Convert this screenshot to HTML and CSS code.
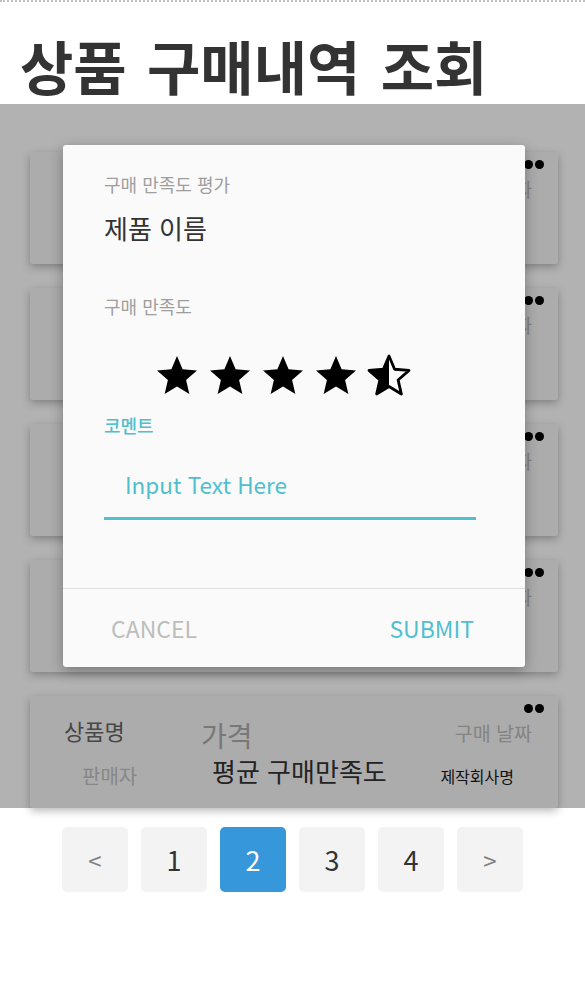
FILE: index.html
```html
<!DOCTYPE html>
<html lang="ko">
<head>
<meta charset="utf-8">
<title>상품 구매내역 조회</title>
<link rel="stylesheet" href="styles.css">
</head>
<body>
<header class="page-header">
  <h1 class="page-title">상품 구매내역 조회</h1>
</header>

<section class="list">
  <div class="card">
    <span class="dots"><i></i><i></i></span>
    <div class="row row-top"><span class="name">상품명</span><span class="price">가격</span><span class="date">구매 날짜</span></div>
    <div class="row row-bottom"><span class="seller">판매자</span><span class="rating">평균 구매만족도</span><span class="maker">제작회사명</span></div>
  </div>
  <div class="card">
    <span class="dots"><i></i><i></i></span>
    <div class="row row-top"><span class="name">상품명</span><span class="price">가격</span><span class="date">구매 날짜</span></div>
    <div class="row row-bottom"><span class="seller">판매자</span><span class="rating">평균 구매만족도</span><span class="maker">제작회사명</span></div>
  </div>
  <div class="card">
    <span class="dots"><i></i><i></i></span>
    <div class="row row-top"><span class="name">상품명</span><span class="price">가격</span><span class="date">구매 날짜</span></div>
    <div class="row row-bottom"><span class="seller">판매자</span><span class="rating">평균 구매만족도</span><span class="maker">제작회사명</span></div>
  </div>
  <div class="card">
    <span class="dots"><i></i><i></i></span>
    <div class="row row-top"><span class="name">상품명</span><span class="price">가격</span><span class="date">구매 날짜</span></div>
    <div class="row row-bottom"><span class="seller">판매자</span><span class="rating">평균 구매만족도</span><span class="maker">제작회사명</span></div>
  </div>
  <div class="card">
    <span class="dots"><i></i><i></i></span>
    <div class="row row-top"><span class="name">상품명</span><span class="price">가격</span><span class="date">구매 날짜</span></div>
    <div class="row row-bottom"><span class="seller">판매자</span><span class="rating">평균 구매만족도</span><span class="maker">제작회사명</span></div>
  </div>

  <div class="overlay">
    <div class="dialog">
      <div class="dialog-body">
        <div class="dlg-caption">구매 만족도 평가</div>
        <div class="dlg-product">제품 이름</div>
        <div class="dlg-label">구매 만족도</div>
        <div class="stars">
          <svg class="star" viewBox="0 0 24 24"><path d="M12 17.27L18.18 21l-1.64-7.03L22 9.24l-7.19-.61L12 2 9.19 8.63 2 9.24l5.46 4.73L5.82 21z"/></svg>
          <svg class="star" viewBox="0 0 24 24"><path d="M12 17.27L18.18 21l-1.64-7.03L22 9.24l-7.19-.61L12 2 9.19 8.63 2 9.24l5.46 4.73L5.82 21z"/></svg>
          <svg class="star" viewBox="0 0 24 24"><path d="M12 17.27L18.18 21l-1.64-7.03L22 9.24l-7.19-.61L12 2 9.19 8.63 2 9.24l5.46 4.73L5.82 21z"/></svg>
          <svg class="star" viewBox="0 0 24 24"><path d="M12 17.27L18.18 21l-1.64-7.03L22 9.24l-7.19-.61L12 2 9.19 8.63 2 9.24l5.46 4.73L5.82 21z"/></svg>
          <svg class="star" viewBox="0 0 24 24">
            <defs><clipPath id="half-left"><rect x="0" y="0" width="12" height="24"/></clipPath></defs>
            <path clip-path="url(#half-left)" d="M12 17.27L18.18 21l-1.64-7.03L22 9.24l-7.19-.61L12 2 9.19 8.63 2 9.24l5.46 4.73L5.82 21z"/>
            <path class="star-outline" d="M12 17.27L18.18 21l-1.64-7.03L22 9.24l-7.19-.61L12 2 9.19 8.63 2 9.24l5.46 4.73L5.82 21z"/>
          </svg>
        </div>
        <div class="dlg-comment-label">코멘트</div>
        <div class="dlg-input">Input Text Here</div>
      </div>
      <div class="dialog-actions">
        <span class="btn-cancel">CANCEL</span>
        <span class="btn-submit">SUBMIT</span>
      </div>
    </div>
  </div>
</section>

<nav class="pager">
  <span class="page arrow">&lt;</span>
  <span class="page">1</span>
  <span class="page active">2</span>
  <span class="page">3</span>
  <span class="page">4</span>
  <span class="page arrow">&gt;</span>
</nav>
</body>
</html>
```

FILE: styles.css
```css
* { box-sizing: border-box; }

html, body {
  margin: 0;
  padding: 0;
  background: #ffffff;
}

body {
  font-family: "Noto Sans CJK KR", "Noto Sans", sans-serif;
  color: #333333;
  width: 585px;
  min-height: 989px;
}

.page-header {
  border-top: 2px dotted #c0c0c0;
  padding: 29px 0 5px 20px;
}

.page-title {
  margin: 0;
  font-size: 58px;
  line-height: 68px;
  font-weight: 700;
  word-spacing: 4px;
  color: #333333;
}

.list {
  position: relative;
  padding: 48px 27px 0 30px;
  display: flex;
  flex-direction: column;
  gap: 24px;
}

.card {
  position: relative;
  height: 112px;
  padding-top: 17px;
  background: #f7f7f7;
  border-radius: 3px;
  box-shadow: 0 3px 9px rgba(0, 0, 0, 0.28);
}

.dots {
  position: absolute;
  top: 8px;
  right: 14px;
  display: flex;
  gap: 2px;
}

.dots i {
  width: 9px;
  height: 9px;
  border-radius: 50%;
  background: #000;
}

.row {
  display: grid;
  align-items: center;
}

.row-top {
  grid-template-columns: 137px 1fr auto;
  height: 40px;
  padding: 0 26px 0 34px;
}

.row-bottom {
  grid-template-columns: 130px 1fr auto;
  height: 46px;
  padding: 0 44px 0 52px;
}

.name { font-size: 22px; line-height: 30px; color: #666666; margin-bottom: 6px; }
.price { font-size: 28px; line-height: 36px; color: #acacac; margin-top: 4px; }
.date { font-size: 19.5px; line-height: 26px; color: #bdbdbd; }
.seller { font-size: 20px; line-height: 26px; color: #c2c2c2; }
.rating { font-size: 26px; line-height: 34px; color: #333333; margin-bottom: 10px; }
.maker { font-size: 16px; line-height: 22px; color: #161616; }

.overlay {
  position: absolute;
  inset: 0;
  background: rgba(0, 0, 0, 0.3);
}

.dialog {
  position: absolute;
  top: 41px;
  left: 63px;
  width: 462px;
  height: 522px;
  background: #fafafa;
  border-radius: 3px;
  box-shadow: 0 4px 14px rgba(0, 0, 0, 0.3);
  display: flex;
  flex-direction: column;
}

.dialog-body {
  padding: 27px 49px 0 41px;
  flex: 1;
}

.dlg-caption {
  font-size: 18px;
  line-height: 24px;
  color: #9e9e9e;
}

.dlg-product {
  margin-top: 15px;
  font-size: 26px;
  line-height: 33px;
  color: #333333;
}

.dlg-label {
  margin-top: 50px;
  font-size: 18px;
  line-height: 24px;
  color: #9e9e9e;
}

.stars {
  margin-top: 34px;
  padding-left: 49px;
  display: flex;
  gap: 5px;
}

.star {
  width: 48px;
  height: 48px;
  fill: #000000;
}

.star-outline {
  fill: none;
  stroke: #000000;
  stroke-width: 1.4;
  stroke-linejoin: round;
}

.dlg-comment-label {
  margin-top: 13px;
  font-size: 18px;
  line-height: 24px;
  font-weight: 500;
  color: #4fbfce;
}

.dlg-input {
  margin-top: 29px;
  padding: 0 0 15px 21px;
  font-size: 22.5px;
  line-height: 36px;
  color: #4fbfce;
  border-bottom: 3px solid #50bfce;
}

.dialog-actions {
  height: 79px;
  border-top: 1px solid #e0e0e0;
  display: flex;
  align-items: center;
  justify-content: space-between;
  padding: 0 51px 0 48px;
  font-size: 23px;
  line-height: 32px;
}

.btn-cancel { color: #bdbdbd; }
.btn-submit { color: #4fbfce; }

.pager {
  margin-top: 19px;
  display: flex;
  justify-content: center;
  gap: 13px;
}

.page {
  width: 66px;
  height: 65px;
  border-radius: 5px;
  background: #f3f3f3;
  display: flex;
  align-items: center;
  justify-content: center;
  font-size: 27px;
  color: #333333;
}

.page.arrow {
  font-size: 24px;
  color: #808080;
}

.page.active {
  background: #3698db;
  color: #ffffff;
}
```
